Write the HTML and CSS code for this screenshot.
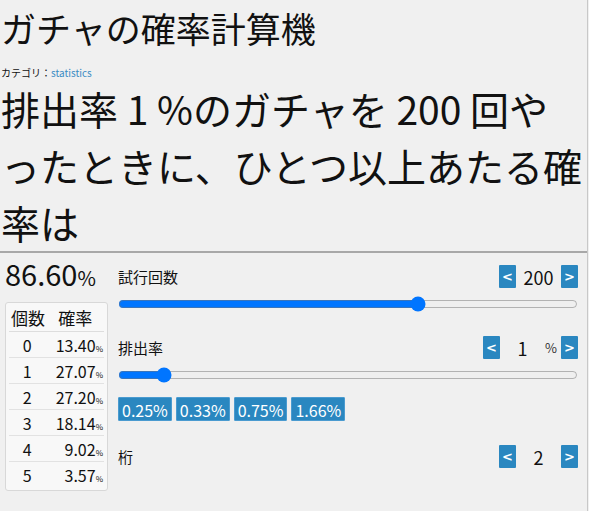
FILE: index.html
```html
<!DOCTYPE html>
<html lang="ja">
<head>
    <meta charset="UTF-8">
    <meta name="viewport" content="width=device-width, initial-scale=1.0">
    <title>ガチャの確率計算機</title>
    <link rel="stylesheet" href="styles.css">
</head>
<body>
    <div class="page">
        <h1 class="title">ガチャの確率計算機</h1>
        <div class="category">カテゴリ：<a href="#">statistics</a></div>

        <h2 class="question">排出率 1 %のガチャを 200 回やったときに、ひとつ以上あたる確率は</h2>

        <div class="calc">
            <!-- Result -->
            <div class="result">
                <div class="total">86.60<span class="unit">%</span></div>
                <table class="dist">
                    <thead>
                        <tr><th>個数</th><th>確率</th></tr>
                    </thead>
                    <tbody>
                        <tr><td>0</td><td>13.40<span class="pct">%</span></td></tr>
                        <tr><td>1</td><td>27.07<span class="pct">%</span></td></tr>
                        <tr><td>2</td><td>27.20<span class="pct">%</span></td></tr>
                        <tr><td>3</td><td>18.14<span class="pct">%</span></td></tr>
                        <tr><td>4</td><td>9.02<span class="pct">%</span></td></tr>
                        <tr><td>5</td><td>3.57<span class="pct">%</span></td></tr>
                    </tbody>
                </table>
            </div>

            <!-- Inputs -->
            <div class="inputs">
                <div class="field">
                    <span class="label">試行回数</span>
                    <div class="stepper">
                        <button class="step-btn">&lt;</button>
                        <span class="value">200</span>
                        <button class="step-btn">&gt;</button>
                    </div>
                </div>
                <input type="range" class="slider" min="0" max="304" value="200">

                <div class="field field-gap">
                    <span class="label">排出率</span>
                    <div class="stepper">
                        <button class="step-btn">&lt;</button>
                        <span class="value">1</span>
                        <span class="value-unit">%</span>
                        <button class="step-btn">&gt;</button>
                    </div>
                </div>
                <input type="range" class="slider" min="0" max="11.7" step="0.1" value="1">

                <div class="presets">
                    <button class="preset">0.25%</button>
                    <button class="preset">0.33%</button>
                    <button class="preset">0.75%</button>
                    <button class="preset">1.66%</button>
                </div>

                <div class="field field-gap">
                    <span class="label">桁</span>
                    <div class="stepper">
                        <button class="step-btn">&lt;</button>
                        <span class="value">2</span>
                        <button class="step-btn">&gt;</button>
                    </div>
                </div>
            </div>
        </div>
    </div>
</body>
</html>
```

FILE: styles.css
```css
body {
    font-family: "Noto Sans CJK JP", sans-serif;
    background-color: #f0f0f0;
    color: #111111;
    margin: 0;
    padding: 0;
}

.page {
    width: 588px;
    min-height: 511px;
    border-right: 1px solid #c8c8c8;
    box-sizing: border-box;
}

.title {
    font-size: 35px;
    font-weight: normal;
    line-height: 40px;
    margin: 0;
    padding: 8px 0 0 1px;
}

.category {
    font-size: 10px;
    line-height: 14px;
    margin: 18px 0 0 1px;
}

.category a {
    color: #3a8cc4;
    text-decoration: none;
}

.question {
    font-size: 39px;
    font-weight: normal;
    line-height: 57px;
    margin: 0;
    padding: 0 0 0 1px;
    border-bottom: 2px solid #a8a8a8;
}

.calc {
    display: flex;
    gap: 10px;
    padding: 0 9px 0 5px;
}

.result {
    width: 103px;
    flex-shrink: 0;
}

.total {
    font-size: 29px;
    line-height: 30px;
    margin-top: 5px;
}

.total .unit {
    font-size: 20px;
}

.dist {
    width: 103px;
    margin-top: 9px;
    border-collapse: separate;
    border-spacing: 0;
    border: 1px solid #d8d8d8;
    border-radius: 3px;
    background-color: #f8f8f8;
    padding: 0 3px 3px;
    font-size: 16px;
}

.dist th {
    font-weight: normal;
    font-size: 17px;
    text-align: left;
    height: 28px;
    padding: 0 2px;
    border-bottom: 1px solid #dddddd;
}

.dist th:last-child {
    padding-left: 8px;
}

.dist td {
    height: 25px;
    padding: 0 1px;
    border-bottom: 1px solid #e2e2e2;
    text-align: right;
}

.dist td:first-child {
    text-align: center;
    padding-right: 6px;
}

.dist tr:last-child td {
    border-bottom: none;
}

.pct {
    font-size: 8px;
}

.inputs {
    flex: 1;
    padding-top: 12px;
}

.field {
    display: flex;
    justify-content: space-between;
    align-items: center;
    height: 23px;
}

.field-gap {
    margin-top: 24px;
}

.label {
    font-size: 15px;
}

.stepper {
    display: flex;
    align-items: center;
}

.step-btn {
    width: 17px;
    height: 23px;
    padding: 0;
    border: none;
    border-radius: 1px;
    background-color: #2a87c0;
    color: #ffffff;
    font-family: "DejaVu Sans", sans-serif;
    font-size: 13px;
    font-weight: bold;
    cursor: pointer;
}

.value {
    width: 45px;
    text-align: center;
    font-size: 18px;
}

.value-unit {
    width: 16px;
    font-size: 13px;
    color: #333333;
}

.slider {
    display: block;
    width: 100%;
    height: 16px;
    margin: 8px 0 0;
}

.presets {
    display: flex;
    gap: 4px;
    margin-top: 14px;
}

.preset {
    padding: 0 3px;
    height: 24px;
    border: 1px solid #4a9bd0;
    border-radius: 1px;
    background-color: #2a87c0;
    color: #ffffff;
    font-family: "Noto Sans CJK JP", sans-serif;
    font-size: 16px;
    cursor: pointer;
}
```
